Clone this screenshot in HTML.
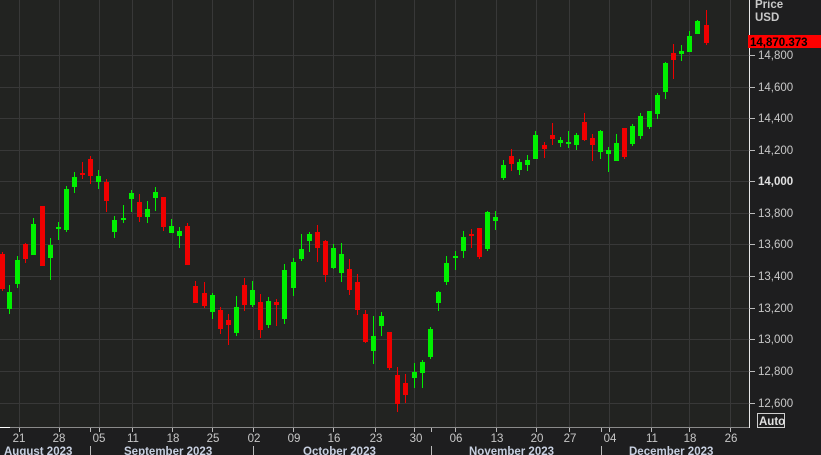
<!DOCTYPE html>
<html><head><meta charset="utf-8"><style>
html,body{margin:0;padding:0;background:#1e1e1e;}
svg{display:block;font-family:"Liberation Sans",sans-serif;}
</style></head><body>
<svg id="s" width="821" height="455" viewBox="0 0 821 455" xmlns="http://www.w3.org/2000/svg">
<rect x="0" y="0" width="821" height="455" fill="#1e1e1f"/>
<rect x="0" y="0" width="749" height="427" fill="#222321"/>
<g id="grid" stroke="#383838" stroke-width="1"></g>
<g id="c"></g>
<line x1="749.5" y1="0" x2="749.5" y2="428" stroke="#e8e8e8"/>
<line x1="0" y1="427.5" x2="749" y2="427.5" stroke="#8a8a8a"/>
<line x1="0" y1="427.5" x2="10" y2="427.5" stroke="#fff"/>
<g id="ticks" stroke="#bbb"></g>
<g fill="#c8c8c8" font-size="11.5">
<text x="755" y="8" font-weight="bold">Price</text>
<text x="755" y="21" font-weight="bold">USD</text>
<text x="758" y="59">14,800</text>
<text x="758" y="91">14,600</text>
<text x="758" y="122">14,400</text>
<text x="758" y="154">14,200</text>
<text x="758" y="185" font-weight="bold" fill="#e0e0e0">14,000</text>
<text x="758" y="217">13,800</text>
<text x="758" y="248">13,600</text>
<text x="758" y="280">13,400</text>
<text x="758" y="312">13,200</text>
<text x="758" y="343">13,000</text>
<text x="758" y="375">12,800</text>
<text x="758" y="407">12,600</text>
</g>
<rect x="748" y="35" width="73" height="13" fill="#ff0000"/>
<text x="750" y="46" font-size="11.5" font-weight="bold" fill="#000">14,870.373</text>
<rect x="757.5" y="413.5" width="27" height="14" fill="none" stroke="#cfcfcf"/>
<text x="759" y="425" font-size="11.5" font-weight="bold" fill="#e0e0e0">Auto</text>
<g fill="#c8c8c8" font-size="11.5" text-anchor="middle">
<text x="19" y="442">21</text><text x="59" y="442">28</text><text x="99" y="442">05</text>
<text x="133" y="442">11</text><text x="173" y="442">18</text><text x="213" y="442">25</text>
<text x="254" y="442">02</text><text x="294" y="442">09</text><text x="334" y="442">16</text>
<text x="376" y="442">23</text><text x="416" y="442">30</text><text x="456" y="442">06</text>
<text x="497" y="442">13</text><text x="537" y="442">20</text><text x="570" y="442">27</text>
<text x="610" y="442">04</text><text x="652" y="442">11</text><text x="690" y="442">18</text>
<text x="731" y="442">26</text>
</g>
<g fill="#c8d0e0" font-size="11.5" font-weight="bold">
<text x="4" y="455">August 2023</text>
<text x="124" y="455">September 2023</text>
<text x="303" y="455">October 2023</text>
<text x="469" y="455">November 2023</text>
<text x="629" y="455">December 2023</text>
</g>
<g stroke="#bbb">
<line x1="90.5" y1="446" x2="90.5" y2="455"/><line x1="253.5" y1="446" x2="253.5" y2="455"/>
<line x1="431.5" y1="446" x2="431.5" y2="455"/><line x1="601.5" y1="446" x2="601.5" y2="455"/>
</g>
</svg>
<script>
var NS="http://www.w3.org/2000/svg";
function el(p,t,a){var e=document.createElementNS(NS,t);for(var k in a)e.setAttribute(k,a[k]);p.appendChild(e);return e;}
var g=document.getElementById('grid');
[55,86.6,118,150,181,213,244,276,308,339,371,403].forEach(function(y){y=Math.round(y)+.5;el(g,'line',{x1:0,y1:y,x2:749,y2:y});});
var tk=document.getElementById('ticks');
[55,86.6,118,150,181,213,244,276,308,339,371,403].forEach(function(y){y=Math.round(y)+.5;el(tk,'line',{x1:749,y1:y,x2:755,y2:y});});
[19,59,99,132,172,212,253,293,333,375,414,455,496,536,569,609,651,689,730].forEach(function(x){x=Math.round(x)+.5;el(g,'line',{x1:x,y1:0,x2:x,y2:427});el(tk,'line',{x1:x,y1:428,x2:x,y2:432});});
[90,431,601].forEach(function(x){el(tk,'line',{x1:x+.5,y1:428,x2:x+.5,y2:432});});
// x, wickTop, wickBot, bodyTop, bodyBot, color(g/r)
var C=[
[2,252,291,254,289,'r'],[9,285,314,292,309,'g'],[17,256,288,260,284,'g'],[25,243,263,244,259,'r'],
[33,218,255,224,255,'g'],[42,206,266,206,266,'r'],[50,238,280,245,258,'g'],[58,222,240,227,229,'g'],
[66,186,232,189,230,'g'],[74,172,193,177,187,'g'],[82,162,179,173,175,'r'],[90,156,184,159,176,'r'],
[98,170,189,176,182,'g'],[106,179,212,182,201,'r'],[114,216,238,220,232,'g'],[123,205,223,218,220,'g'],
[131,190,212,193,199,'g'],[139,194,222,202,217,'r'],[147,201,223,209,217,'g'],[155,187,211,192,198,'g'],
[163,197,231,197,227,'r'],[171,219,233,226,233,'g'],[179,227,248,231,236,'g'],[187,223,265,226,265,'r'],
[195,281,303,286,303,'r'],[204,282,308,293,306,'r'],[212,293,319,295,312,'g'],[220,307,334,310,329,'r'],
[228,314,345,320,325,'r'],[236,296,336,307,333,'g'],[244,278,311,285,305,'r'],[252,281,307,290,305,'g'],
[260,294,338,302,330,'r'],[268,297,328,301,325,'g'],[276,299,326,302,305,'r'],[284,264,324,270,319,'g'],
[293,258,296,262,288,'g'],[301,234,261,249,259,'g'],[309,232,252,234,241,'g'],[317,225,262,232,248,'r'],
[325,240,282,241,275,'r'],[333,244,269,248,268,'g'],[341,243,282,254,273,'g'],[349,259,295,269,290,'r'],
[357,274,315,282,310,'r'],[365,310,343,314,342,'r'],[373,316,364,336,351,'g'],[381,312,336,316,326,'g'],
[389,332,370,332,368,'r'],[397,367,412,375,404,'r'],[405,374,403,383,395,'r'],[414,363,388,372,378,'g'],
[422,360,388,362,373,'g'],[430,327,359,329,357,'g'],[438,291,311,292,303,'g'],[446,256,285,263,282,'g'],
[455,251,270,256,258,'g'],[463,231,258,237,251,'g'],[471,229,248,234,236,'r'],[479,228,259,228,257,'r'],
[487,211,251,212,249,'g'],[495,211,230,217,221,'g'],[503,160,180,165,178,'g'],[511,149,171,156,164,'r'],
[519,159,175,162,170,'g'],[527,155,171,160,165,'g'],[535,131,159,135,159,'g'],[544,142,158,145,149,'r'],
[552,123,145,135,139,'r'],[560,137,147,140,143,'g'],[568,131,148,142,143,'g'],[576,133,150,135,145,'g'],
[584,113,141,122,140,'r'],[592,134,161,138,145,'r'],[600,130,159,131,152,'g'],[608,147,172,150,154,'g'],
[616,134,161,143,161,'g'],[624,128,159,128,157,'r'],[632,124,146,126,144,'g'],[640,113,139,116,136,'g'],
[649,111,129,111,127,'g'],[657,93,119,95,114,'g'],[665,62,99,63,92,'g'],[673,44,79,53,60,'r'],
[681,45,61,51,54,'g'],[689,31,52,36,52,'g'],[697,20,34,21,34,'g'],[706,10,45,25,43,'r']];
var cg=document.getElementById('c');
C.forEach(function(c){var col=c[5]=='g'?'#00f000':'#f00000';
el(cg,'rect',{x:c[0],y:c[1],width:1,height:c[2]-c[1],fill:col});
el(cg,'rect',{x:c[0]-2,y:c[3],width:5,height:Math.max(2,c[4]-c[3]),fill:col});});
</script>
</body></html>
